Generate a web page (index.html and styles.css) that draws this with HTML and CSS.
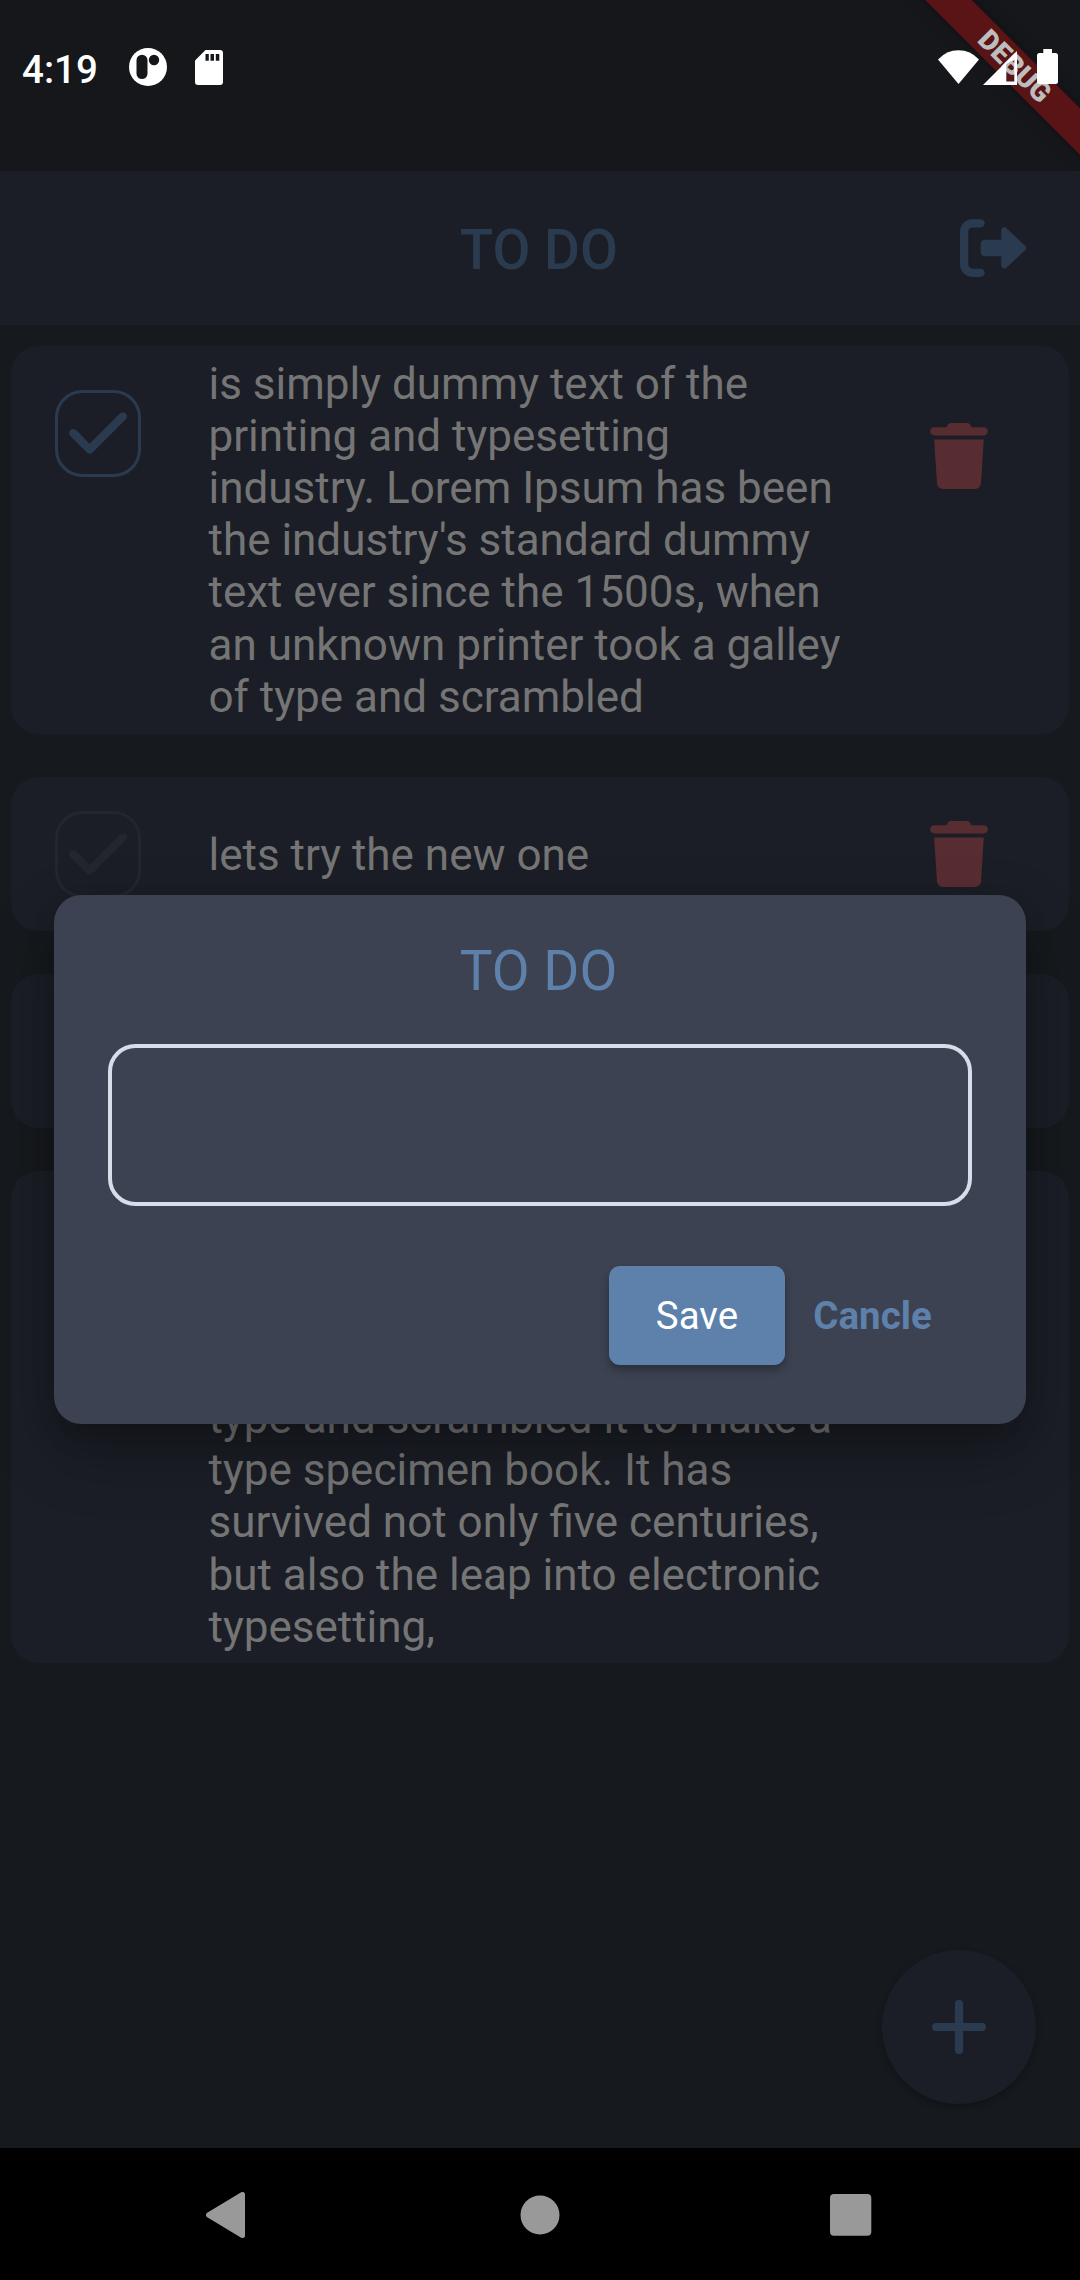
FILE: index.html
```html
<!DOCTYPE html>
<html lang="en">
<head>
<meta charset="utf-8">
<title>TO DO</title>
<link rel="stylesheet" href="styles.css">
</head>
<body>
<svg class="defs" aria-hidden="true">
  <symbol id="check" viewBox="0 0 448 512"><path d="M438.6 105.4C451.1 117.9 451.1 138.1 438.6 150.6L182.6 406.6C170.1 419.1 149.9 419.1 137.4 406.6L9.372 278.6C-3.124 266.1-3.124 245.9 9.372 233.4C21.87 220.9 42.13 220.9 54.63 233.4L159.1 338.7L393.4 105.4C405.9 92.88 426.1 92.88 438.6 105.4z"/></symbol>
  <symbol id="trash" viewBox="0 0 448 512"><path d="M135.2 17.69C140.6 6.848 151.7 0 163.8 0H284.2C296.3 0 307.4 6.848 312.8 17.69L320 32H416C433.7 32 448 46.33 448 64C448 81.67 433.7 96 416 96H32C14.33 96 0 81.67 0 64C0 46.33 14.33 32 32 32H128L135.2 17.69zM394.8 466.1C393.2 492.3 372.3 512 346.9 512H101.1C75.75 512 54.77 492.3 53.19 466.1L31.1 128H416L394.8 466.1z"/></symbol>
</svg>
<div class="screen">
  <div class="status">
    <div class="status-left">
      <span class="time">4:19</span>
      <svg class="ic-app" viewBox="0 0 38 38"><circle cx="19" cy="19" r="19"/><rect class="hole" x="7.5" y="6.7" width="11" height="24.4" rx="5.5"/><circle class="hole" cx="25" cy="12" r="5.2"/></svg>
      <svg class="ic-sd" viewBox="0 0 28 35"><path d="M10.500 0H25Q28 0 28 3V32Q28 35 25 35H3Q0 35 0 32V10.500Z"/><path class="hole" d="M10.500 4h3.300v6.700h-3.300zM15.500 4h3.500v6.700h-3.500zM20.800 4h3.500v6.700h-3.500z"/></svg>
    </div>
    <div class="status-right">
      <svg class="ic-wifi" viewBox="0 0 41 34"><path d="M20.500 34L0 9.500Q8.500 0.300 20.500 0.300T41 9.500Z"/></svg>
      <svg class="ic-signal" viewBox="0 0 34 34"><path fill-rule="evenodd" d="M34 0V34H0ZM31.300 8.500L23.300 13V30.500H31.300Z"/></svg>
      <svg class="ic-battery" viewBox="0 0 21 35"><path d="M6.300 0H15V4H18.500Q21 4 21 6.500V32.500Q21 35 18.500 35H2.500Q0 35 0 32.500V6.500Q0 4 2.500 4H6.300Z"/></svg>
    </div>
    <div class="debug">DEBUG</div>
  </div>
  <header class="appbar">
    <h1 class="appbar-title">TO DO</h1>
    <svg class="logout" viewBox="0 0 512 512"><path d="M96 480h64C177.7 480 192 465.7 192 448S177.7 416 160 416H96c-17.67 0-32-14.33-32-32V128c0-17.67 14.33-32 32-32h64C177.7 96 192 81.67 192 64S177.7 32 160 32H96C42.98 32 0 74.98 0 128v256C0 437 42.98 480 96 480zM504.8 238.5l-144.1-136c-6.975-6.578-17.2-8.375-26-4.594c-8.803 3.797-14.51 12.47-14.51 22.05l-.0918 72l-128-.001c-17.69 0-32.02 14.33-32.02 32v64c0 17.67 14.34 32 32.02 32l128 .001l.0918 71.1c0 9.578 5.707 18.25 14.51 22.05c8.803 3.781 19.03 1.984 26-4.594l144.1-136C514.4 264.4 514.4 247.6 504.8 238.5z"/></svg>
  </header>
  <main class="list">
    <article class="card card-first">
      <div class="box done"><svg class="fa"><use href="#check"/></svg></div>
      <p class="text">is simply dummy text of the<br>printing and typesetting<br>industry. Lorem Ipsum has been<br>the industry's standard dummy<br>text ever since the 1500s, when<br>an unknown printer took a galley<br>of type and scrambled</p>
      <svg class="fa trash"><use href="#trash"/></svg>
    </article>
    <article class="card card-short">
      <div class="box"><svg class="fa"><use href="#check"/></svg></div>
      <p class="text">lets try the new one</p>
      <svg class="fa trash"><use href="#trash"/></svg>
    </article>
    <article class="card card-short"></article>
    <article class="card card-last">
      <p class="text">type and scrambled it to make a<br>type specimen book. It has<br>survived not only five centuries,<br>but also the leap into electronic<br>typesetting,</p>
    </article>
  </main>
  <div class="fab"><svg class="plus" viewBox="0 0 54 54"><path d="M27 4.100V49.900M4.100 27H49.900"/></svg></div>
  <nav class="nav">
    <svg class="nav-back" viewBox="0 0 40 46"><path d="M36.500 2.500V43.500L2.500 23Z"/></svg>
    <svg class="nav-home" viewBox="0 0 40 40"><circle cx="20" cy="20" r="19.500"/></svg>
    <svg class="nav-recent" viewBox="0 0 42 42"><rect width="41.300" height="41.700" rx="4"/></svg>
  </nav>
  <div class="overlay">
    <section class="dialog">
      <h2 class="dialog-title">TO DO</h2>
      <div class="field"></div>
      <div class="actions">
        <button class="save">Save</button>
        <button class="cancel">Cancle</button>
      </div>
    </section>
  </div>
</div>
</body>
</html>
```
FILE: styles.css
```css
:root {
  --surface: #1b1e26;
  --bg: #16191d;
  --accent-dim: #2b3b4f;
  --accent: #5e81ac;
}
* { box-sizing: border-box; }
body { margin: 0; font-family: Roboto, "Liberation Sans", sans-serif; }
h1, h2, p { margin: 0; }
svg { display: block; flex: none; }
.defs { display: none; }
.screen {
  position: relative;
  width: 1080px;
  height: 2280px;
  background: var(--bg);
  overflow: hidden;
  display: flex;
  flex-direction: column;
}

/* status bar */
.status {
  position: relative;
  flex: none;
  height: 171px;
  padding: 48px 22px 0 22px;
  background: #15171b;
  display: flex;
  justify-content: space-between;
  align-items: flex-start;
  overflow: hidden;
}
.status-left, .status-right { display: flex; align-items: flex-start; fill: #fff; position: relative; z-index: 1; }
.time { font-size: 38.5px; font-weight: 500; line-height: 44px; color: #fff; width: 76px; margin-right: 30.8px; white-space: nowrap; }
.hole { fill: #15171b; }
.ic-app { width: 38px; height: 38px; margin: 0.3px 28px 0 0; }
.ic-sd { width: 28px; height: 35px; margin-top: 2px; }
.ic-wifi { width: 41px; height: 34px; margin: 2px 3.500px 0 0; }
.ic-signal { width: 34px; height: 34px; margin: 2.700px 20.500px 0 0; }
.ic-battery { width: 21px; height: 35px; margin-top: 1px; }
.debug {
  position: absolute;
  left: 864.200px;
  top: 49.300px;
  width: 300px;
  height: 33px;
  padding-left: 2px;
  transform: rotate(45deg);
  background: #5b1415;
  box-shadow: 0 0 16px rgba(0, 0, 0, .3);
  color: #bdbdbd;
  font-size: 28px;
  font-weight: 900;
  line-height: 33px;
  text-align: center;
}

/* app bar */
.appbar {
  flex: none;
  height: 154px;
  padding: 0 54.500px 0 118px;
  background: var(--surface);
  display: flex;
  align-items: center;
}
.appbar-title { flex: 1; padding-top: 3px; text-align: center; font-size: 55px; font-weight: 500; color: var(--accent-dim); }
.logout { width: 66px; height: 66px; fill: var(--accent-dim); }

/* list */
.list { flex: 1; padding: 21px 11px 0; display: flex; flex-direction: column; gap: 43px; }
.card {
  flex: none;
  background: var(--surface);
  border-radius: 27.500px;
  display: flex;
  align-items: flex-start;
  padding: 11px 81px 11px 44px;
}
.card-first { height: 388px; }
.card-short { height: 154px; align-items: center; }
.card-last { height: 492px; align-items: flex-end; padding: 0 81px 10px 197.500px; }
.box {
  flex: none;
  width: 86px;
  height: 87px;
  border: 3px solid #23262f;
  border-radius: 27.500px;
  display: flex;
  align-items: center;
  justify-content: center;
  fill: #23262f;
}
.box.done { border-color: var(--accent-dim); fill: var(--accent-dim); }
.card-first .box { margin-top: 32.500px; }
.fa { width: 58px; height: 66px; }
.text { flex: 1; font-size: 44px; line-height: 52.200px; color: #757575; white-space: nowrap; }
.card-first .text { margin-top: 0.500px; }
.card-short .text { padding-top: 2px; }
.box + .text { margin-left: 67.500px; }
.trash { fill: #582d31; }
.card-first .trash { margin-top: 66px; }

.fab {
  position: absolute;
  right: 44px;
  bottom: 176px;
  width: 154px;
  height: 154px;
  border-radius: 50%;
  background: var(--surface);
  box-shadow: 0 3px 7px rgba(0, 0, 0, .22);
  display: grid;
  place-items: center;
}
.plus { width: 54px; height: 54px; stroke: var(--accent-dim); stroke-width: 8.200; stroke-linecap: round; }

/* system navigation */
.nav { flex: none; height: 132px; padding: 1px 208px 0 206px; background: #000; display: flex; align-items: center; justify-content: space-between; fill: #999; }
.nav-back { width: 40px; height: 46px; stroke: #999; stroke-width: 5; stroke-linejoin: round; }
.nav-home { width: 40px; height: 40px; margin-left: 4px; }
.nav-recent { width: 42px; height: 42px; }

/* dialog */
.overlay { position: absolute; inset: 171px 0 132px; display: grid; place-items: center; }
.dialog {
  width: 972px;
  height: 529px;
  padding: 44px 54px 0;
  border-radius: 27.500px;
  background: #3c4251;
  box-shadow: 0 28px 64px rgba(0, 0, 0, .26), 0 12px 26px rgba(0, 0, 0, .14);
}
.dialog-title { padding-right: 3px; font-size: 55px; font-weight: 400; line-height: 65px; text-align: center; color: var(--accent); }
.field { height: 162px; margin-top: 40px; border: 4px solid #d8dee9; border-radius: 27.500px; }
.actions { margin-top: 59.500px; display: flex; justify-content: flex-end; padding-right: 14px; }
.save, .cancel { border: 0; padding: 0; height: 99.500px; font: 400 38.500px Roboto, sans-serif; }
.save { width: 176px; background: var(--accent); color: #fff; border-radius: 11px; box-shadow: 0 5px 8px rgba(0, 0, 0, .3); }
.cancel { width: 173px; padding-left: 2px; background: none; color: var(--accent); font-weight: 700; }
```
